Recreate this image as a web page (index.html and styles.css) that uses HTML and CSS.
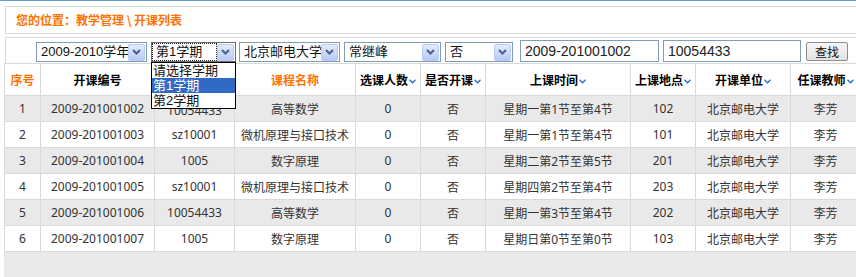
FILE: index.html
```html
<!DOCTYPE html>
<html>
<head>
    <title>开课列表</title>
    <link rel="stylesheet" href="styles.css">
</head>
<body>
    <div class="topline"></div>
    <div class="page">
        <div class="crumb">您的位置：教学管理 \ 开课列表</div>

        <div class="filter">
            <span class="combo c1"><span class="val">2009-2010学年</span><span class="arr"><svg width="9" height="6" viewBox="0 0 9 6"><path d="M1 1 L4.5 4.5 L8 1" fill="none" stroke="#4a5f8c" stroke-width="2"/></svg></span></span>
            <span class="combo c2 open"><span class="val focus">第1学期</span><span class="arr"><svg width="9" height="6" viewBox="0 0 9 6"><path d="M1 1 L4.5 4.5 L8 1" fill="none" stroke="#4a5f8c" stroke-width="2"/></svg></span>
                <ul class="droplist">
                    <li>请选择学期</li>
                    <li class="hl">第1学期</li>
                    <li>第2学期</li>
                </ul>
            </span>
            <span class="combo c3"><span class="val">北京邮电大学</span><span class="arr"><svg width="9" height="6" viewBox="0 0 9 6"><path d="M1 1 L4.5 4.5 L8 1" fill="none" stroke="#4a5f8c" stroke-width="2"/></svg></span></span>
            <span class="combo c4"><span class="val">常继峰</span><span class="arr"><svg width="9" height="6" viewBox="0 0 9 6"><path d="M1 1 L4.5 4.5 L8 1" fill="none" stroke="#4a5f8c" stroke-width="2"/></svg></span></span>
            <span class="combo c5"><span class="val">否</span><span class="arr"><svg width="9" height="6" viewBox="0 0 9 6"><path d="M1 1 L4.5 4.5 L8 1" fill="none" stroke="#4a5f8c" stroke-width="2"/></svg></span></span>
            <input class="txt t1" type="text" value="2009-201001002">
            <input class="txt t2" type="text" value="10054433">
            <button class="find-btn">查找</button>
        </div>

        <table class="grid">
            <colgroup>
                <col style="width:36px"><col style="width:114px"><col style="width:80px"><col style="width:121px"><col style="width:65px">
                <col style="width:65px"><col style="width:145px"><col style="width:65px"><col style="width:95px"><col style="width:70px">
            </colgroup>
            <thead>
                <tr>
                    <th class="sorted">序号</th>
                    <th>开课编号</th>
                    <th></th>
                    <th class="sorted">课程名称</th>
                    <th>选课人数<svg class="sort" width="7" height="5" viewBox="0 0 7 5"><path d="M0.5 0.8 L3.5 3.8 L6.5 0.8" fill="none" stroke="#2a6ac8" stroke-width="1.3"/></svg></th>
                    <th>是否开课<svg class="sort" width="7" height="5" viewBox="0 0 7 5"><path d="M0.5 0.8 L3.5 3.8 L6.5 0.8" fill="none" stroke="#2a6ac8" stroke-width="1.3"/></svg></th>
                    <th>上课时间<svg class="sort" width="7" height="5" viewBox="0 0 7 5"><path d="M0.5 0.8 L3.5 3.8 L6.5 0.8" fill="none" stroke="#2a6ac8" stroke-width="1.3"/></svg></th>
                    <th>上课地点<svg class="sort" width="7" height="5" viewBox="0 0 7 5"><path d="M0.5 0.8 L3.5 3.8 L6.5 0.8" fill="none" stroke="#2a6ac8" stroke-width="1.3"/></svg></th>
                    <th>开课单位<svg class="sort" width="7" height="5" viewBox="0 0 7 5"><path d="M0.5 0.8 L3.5 3.8 L6.5 0.8" fill="none" stroke="#2a6ac8" stroke-width="1.3"/></svg></th>
                    <th>任课教师<svg class="sort" width="7" height="5" viewBox="0 0 7 5"><path d="M0.5 0.8 L3.5 3.8 L6.5 0.8" fill="none" stroke="#2a6ac8" stroke-width="1.3"/></svg></th>
                </tr>
            </thead>
            <tbody>
                <tr><td>1</td><td>2009-201001002</td><td class="under">10054433</td><td>高等数学</td><td>0</td><td>否</td><td>星期一第1节至第4节</td><td>102</td><td>北京邮电大学</td><td>李芳</td></tr>
                <tr><td>2</td><td>2009-201001003</td><td>sz10001</td><td>微机原理与接口技术</td><td>0</td><td>否</td><td>星期一第1节至第4节</td><td>101</td><td>北京邮电大学</td><td>李芳</td></tr>
                <tr><td>3</td><td>2009-201001004</td><td>1005</td><td>数字原理</td><td>0</td><td>否</td><td>星期二第2节至第5节</td><td>201</td><td>北京邮电大学</td><td>李芳</td></tr>
                <tr><td>4</td><td>2009-201001005</td><td>sz10001</td><td>微机原理与接口技术</td><td>0</td><td>否</td><td>星期四第2节至第4节</td><td>203</td><td>北京邮电大学</td><td>李芳</td></tr>
                <tr><td>5</td><td>2009-201001006</td><td>10054433</td><td>高等数学</td><td>0</td><td>否</td><td>星期一第3节至第4节</td><td>202</td><td>北京邮电大学</td><td>李芳</td></tr>
                <tr><td>6</td><td>2009-201001007</td><td>1005</td><td>数字原理</td><td>0</td><td>否</td><td>星期日第0节至第0节</td><td>103</td><td>北京邮电大学</td><td>李芳</td></tr>
            </tbody>
        </table>
        <div class="pager"></div>
    </div>
</body>
</html>
```

FILE: styles.css
```css
body {
    margin: 0;
    font-family: "Noto Sans", "Noto Sans CJK SC", sans-serif;
    font-size: 12px;
    color: #333;
    background-color: #fff;
    overflow: hidden;
}
.topline {
    height: 1px;
    background-color: #6b9bd2;
}
.page {
    padding-left: 5px;
    width: 870px;
}
.crumb {
    margin-top: 5px;
    height: 26px;
    line-height: 26px;
    border: 1px solid #dadada;
    border-right: none;
    padding-left: 10px;
    color: #ff7200;
    font-weight: bold;
    font-family: "Noto Sans CJK SC", sans-serif;
}
.filter {
    margin-top: 3px;
    height: 25px;
    border-top: 1px solid #dadada;
    border-left: 1px solid #dadada;
    padding-left: 30px;
    display: flex;
    align-items: flex-start;
    font-family: "Liberation Sans", "Noto Sans CJK SC", sans-serif;
    font-size: 13px;
    color: #111;
}
.combo {
    position: relative;
    margin-top: 4px;
    height: 18px;
    border: 1px solid #7f9db9;
    background-color: #fff;
    display: flex;
    align-items: center;
    box-sizing: content-box;
}
.combo .val {
    flex: 1;
    padding-left: 4px;
    line-height: 16px;
    white-space: nowrap;
    overflow: hidden;
}
.combo .val.focus {
    margin: 0 1px;
    padding-left: 3px;
    outline: 1px dotted #222;
    outline-offset: 0;
}
.combo .arr {
    width: 15px;
    height: 15px;
    margin-right: 1px;
    border: 1px solid #b9cbf3;
    border-radius: 2px;
    background: linear-gradient(#e4ebfc, #b7caf4);
    display: flex;
    align-items: center;
    justify-content: center;
}
.c1 { width: 109px; }
.c2 { width: 83px; margin-left: 4px; border-color: #6d6d6d; }
.c3 { width: 99px; margin-left: 3px; }
.c4 { width: 95px; margin-left: 4px; }
.c5 { width: 66px; margin-left: 4px; }
.droplist {
    position: absolute;
    top: 19px;
    left: -1px;
    width: 83px;
    margin: 0;
    padding: 0;
    list-style: none;
    background-color: #fff;
    border: 1px solid #000;
    z-index: 5;
}
.droplist li {
    height: 15px;
    line-height: 15px;
    padding-left: 1px;
    white-space: nowrap;
}
.droplist li.hl {
    background-color: #316ac5;
    color: #fff;
}
.txt {
    margin-top: 2px;
    height: 20px;
    border: 1px solid #7f9db9;
    padding: 0 4px;
    font-family: "Liberation Sans", sans-serif;
    font-size: 14px;
    color: #222;
    box-sizing: content-box;
    outline: none;
}
.t1 { width: 129px; margin-left: 7px; }
.t2 { width: 128px; margin-left: 4px; }
.find-btn {
    margin-top: 4px;
    margin-left: 5px;
    width: 42px;
    height: 19px;
    padding: 0;
    border: 1px solid #8d8d8d;
    border-radius: 2px;
    background: linear-gradient(#f6f6f6, #e1e1e1);
    font-family: "Noto Sans CJK SC", sans-serif;
    font-size: 12px;
    line-height: 17px;
    color: #111;
}
.grid {
    margin-left: -1px;
    border-collapse: collapse;
    table-layout: fixed;
    width: 856px;
}
.grid th,
.grid td {
    border: 1px solid #d9d9d9;
    text-align: center;
    white-space: nowrap;
    overflow: hidden;
    padding: 0;
}
.grid th {
    height: 31px;
    font-family: "Noto Sans CJK SC", sans-serif;
    font-weight: bold;
    color: #000;
    background-color: #fff;
}
.grid th.sorted {
    color: #ff7200;
}
.grid th .sort {
    margin-left: 1px;
    vertical-align: middle;
}
.grid td {
    height: 25px;
}
.grid td.under {
    vertical-align: bottom;
    line-height: 20px;
}
.grid tbody tr:nth-child(odd) td {
    background-color: #e9e9e9;
}
.pager {
    margin-left: -1px;
    height: 30px;
    background-color: #e9e9e9;
}
```
